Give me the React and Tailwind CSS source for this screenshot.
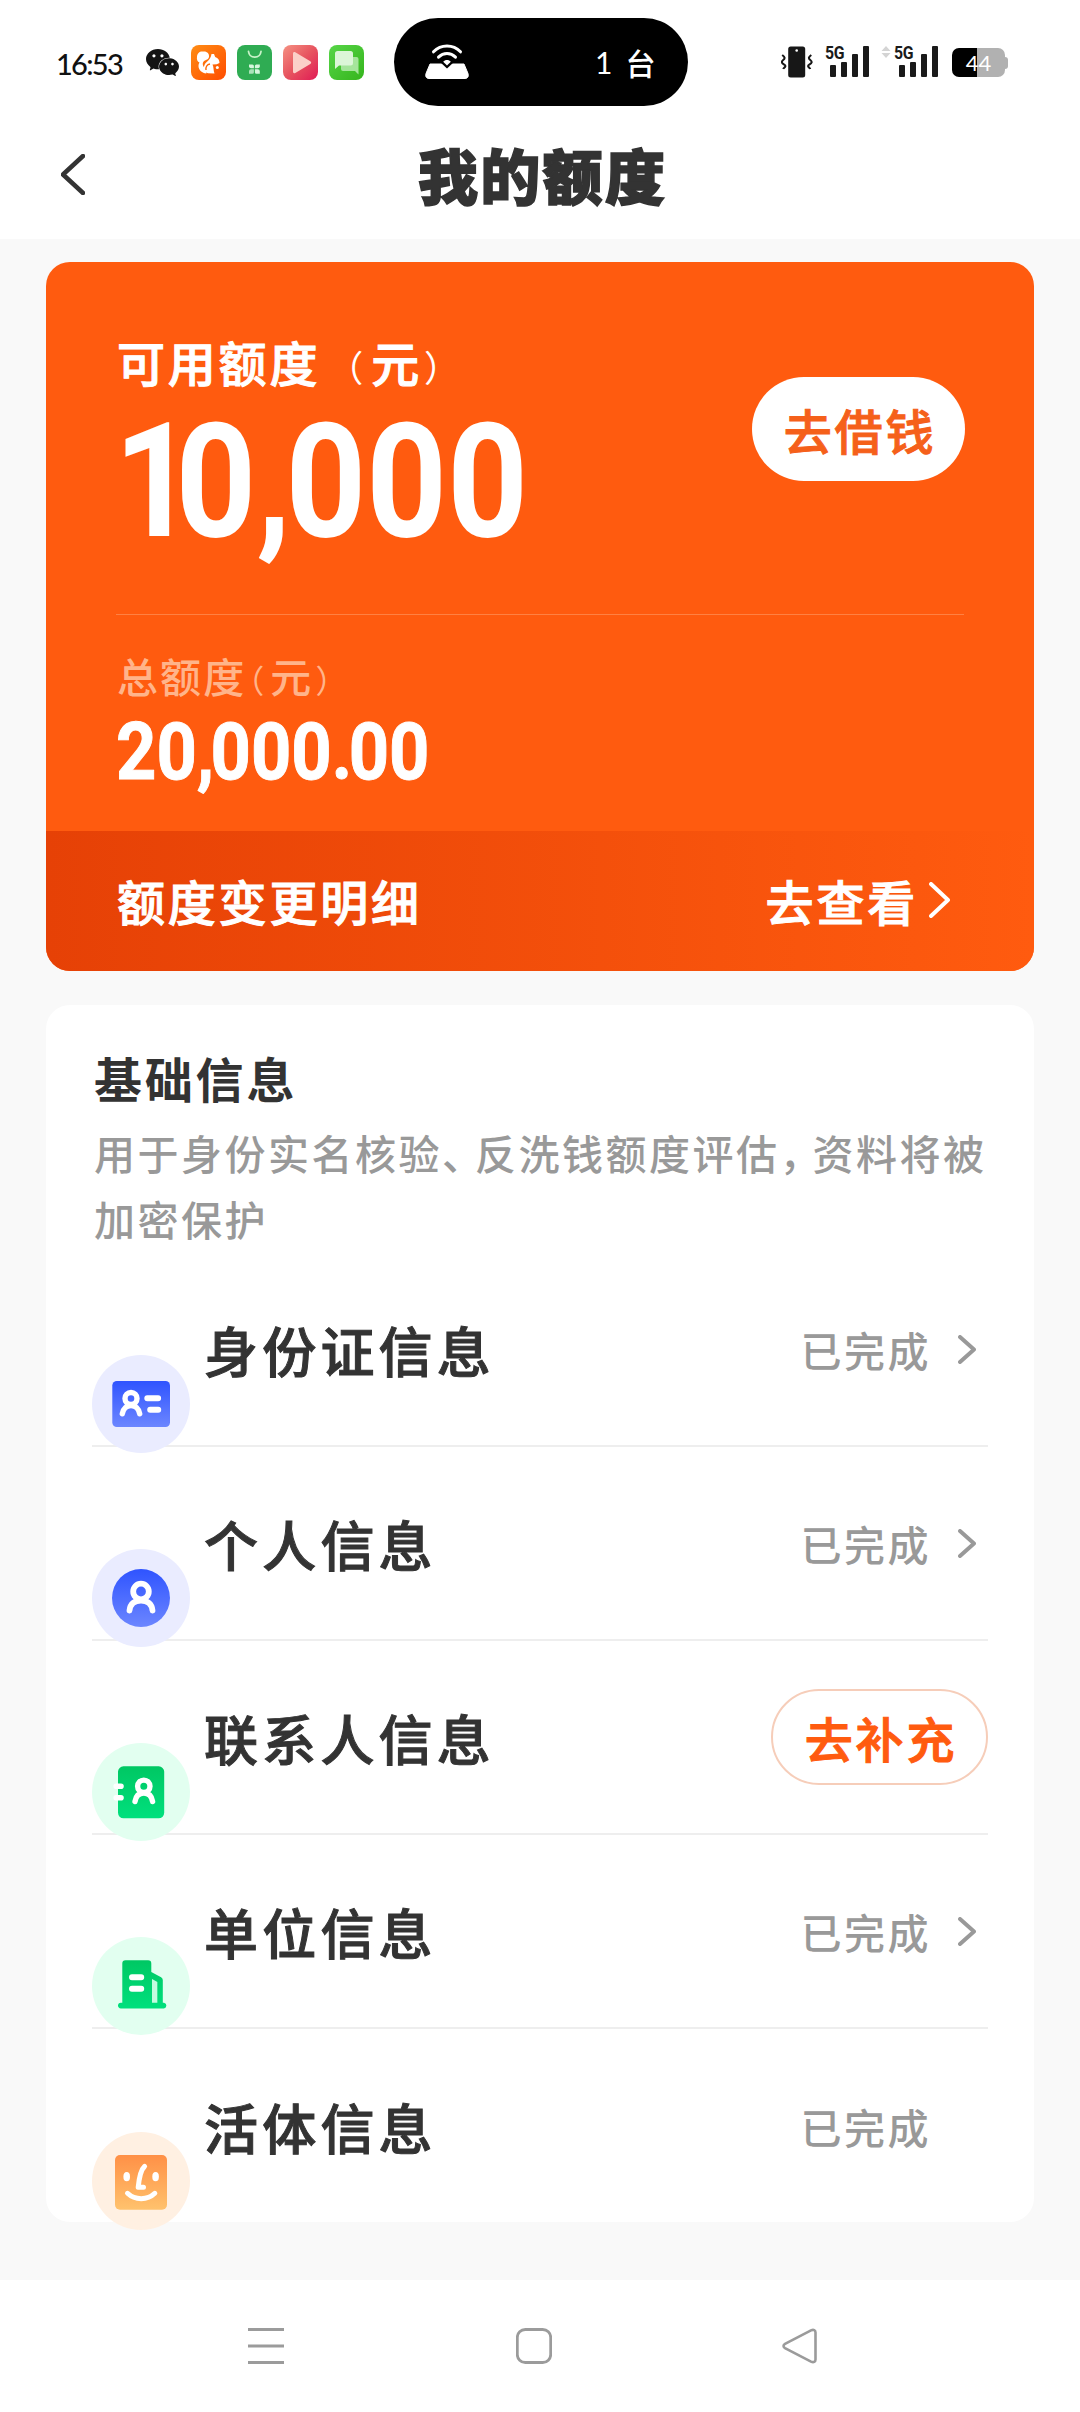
import React from "react";
import { SiWechat } from "react-icons/si";

function Person({ cx, cy, r, w, body }) {
  return (
    <g fill="none" stroke="#fff" strokeWidth={w} strokeLinecap="round">
      <circle cx={cx} cy={cy} r={r} />
      <path d={body} />
    </g>
  );
}

function IdCardIcon() {
  return (
    <svg viewBox="0 0 98 98" className="block size-[98px]">
      <defs>
        <linearGradient id="blue" x1="0" y1="0" x2="0" y2="1">
          <stop offset="0" stopColor="#2f54ff" />
          <stop offset="1" stopColor="#6c86ff" />
        </linearGradient>
      </defs>
      <circle cx="49" cy="49" r="49" fill="#eaecff" />
      <rect x="20.3" y="26" width="57.7" height="46" rx="4.5" fill="url(#blue)" />
      <Person cx="39" cy="43.5" r="6" w="5.4" body="M30.3 58.800C31.300 53 35 50.500 39 50.500S46.700 53 47.700 58.800" />
      <path d="M55.3 43.2h10.8M58.2 54.8h8" stroke="#fff" strokeWidth="6" strokeLinecap="round" />
    </svg>
  );
}

function PersonIcon() {
  return (
    <svg viewBox="0 0 98 98" className="block size-[98px]">
      <circle cx="49" cy="49" r="49" fill="#eaecff" />
      <circle cx="49" cy="49" r="29" fill="url(#blue)" />
      <Person cx="49" cy="42.5" r="7.8" w="5.8" body="M37.5 61.500C38.200 54.500 43 51.500 49 51.500S59.800 54.500 60.500 61.500" />
    </svg>
  );
}

function ContactsIcon() {
  return (
    <svg viewBox="0 0 98 98" className="block size-[98px]">
      <defs>
        <linearGradient id="green" x1="0" y1="0" x2="0" y2="1">
          <stop offset="0" stopColor="#00c763" />
          <stop offset="1" stopColor="#00e07d" />
        </linearGradient>
      </defs>
      <circle cx="49" cy="49" r="49" fill="#e2fff0" />
      <rect x="26" y="23.3" width="46.2" height="52" rx="5.5" fill="url(#green)" />
      <path d="M24.2 43.300h4.800M24.200 54.700h4.800" stroke="#fff" strokeWidth="5.6" strokeLinecap="round" />
      <Person cx="51.8" cy="43.3" r="6.2" w="5.4" body="M43 58.500C44 52.500 47.500 50 51.800 50S59.600 52.500 60.600 58.500" />
    </svg>
  );
}

function BuildingIcon() {
  return (
    <svg viewBox="0 0 98 98" className="block size-[98px]">
      <circle cx="49" cy="49" r="49" fill="#e2fff0" />
      <path d="M60 42L65.300 45V66H60z" fill="#c3fbdf" />
      <path
        d="M26 68.600a2.900 2.900 0 0 1 2.900-2.900h1.400V26.500a3.200 3.200 0 0 1 3.200-3.200h22.600a3.200 3.200 0 0 1 3.200 3.200v8.500l9.800 5.300a3.200 3.200 0 0 1 1.700 2.800v22.600h1.200a2.900 2.900 0 0 1 0 5.700H28.900a2.900 2.900 0 0 1-2.900-2.800zM60 42v23.700h5.300V45z"
        fill="url(#green)"
        fillRule="evenodd"
      />
      <path d="M40 40.300h9.200M40 51.700h9.200" stroke="#fff" strokeWidth="6" strokeLinecap="round" />
    </svg>
  );
}

function FaceIcon() {
  return (
    <svg viewBox="0 0 98 98" className="block size-[98px]">
      <defs>
        <linearGradient id="amber" x1="0" y1="0" x2="0" y2="1">
          <stop offset="0" stopColor="#ff9046" />
          <stop offset="1" stopColor="#ffc26d" />
        </linearGradient>
      </defs>
      <circle cx="49" cy="49" r="49" fill="#fff0e2" />
      <rect x="23" y="23" width="52" height="54.7" rx="5" fill="url(#amber)" />
      <ellipse cx="34.7" cy="44.7" rx="3.3" ry="4.6" fill="#fff" />
      <ellipse cx="63.6" cy="44.7" rx="3.3" ry="4.6" fill="#fff" />
      <g fill="none" stroke="#fff" strokeWidth="5" strokeLinecap="round" strokeLinejoin="round">
        <path d="M52.600 34.300C48.500 38 47 47 46.200 55.300H51.500" />
        <path d="M35.500 61.300C43 68.400 55.500 68.400 62.800 61.300" />
      </g>
    </svg>
  );
}

function Signal() {
  return (
    <div className="relative h-[31px] w-[44px]">
      <span className="absolute -top-[1px] left-0 origin-left scale-x-[0.88] font-['Roboto'] text-[18px] leading-[16px] font-bold tracking-[-0.5px] text-[#1a1a1a]">5G</span>
      <div className="flex h-full items-end justify-end gap-[5px]">
        <i className="h-[12px] w-[6px] rounded-[1px] bg-[#1a1a1a]" />
        <i className="h-[15px] w-[6px] rounded-[1px] bg-[#1a1a1a]" />
        <i className="h-[23px] w-[6px] rounded-[1px] bg-[#1a1a1a]" />
        <i className="h-[31px] w-[6px] rounded-[1px] bg-[#1a1a1a]" />
      </div>
    </div>
  );
}

function AppIcons() {
  return (
    <div className="flex gap-[11px]">
      <svg viewBox="0 0 35 35" className="size-[35px]">
        <defs>
          <linearGradient id="uc" x1="0" y1="0" x2="1" y2="1">
            <stop offset="0" stopColor="#ff8d14" />
            <stop offset="1" stopColor="#ff4c00" />
          </linearGradient>
        </defs>
        <rect width="35" height="35" rx="8" fill="url(#uc)" />
        <path
          d="M6 12c0-4 3-6 6-5.500 4-.5 6.500 2 6 5.500-.4 2-2 2.600-4 3.500-3 1.400-3 5 .2 8 1.200 1.200 2 3 1 5-4-.3-7.500-3.500-7.700-7-.1-2 .5-3.200 1-4C6.500 17 5.500 14.500 6 12z"
          fill="#fff"
        />
        <path d="M23 9l1.200 3c3 1 4.300 3.200 4.300 6l-2.700 1.200-4.300.3c1.300 2.500.8 6 2 9l-6.500-.2c-3.500-1.500-5-5-3.500-8.300 1.300-3.500 6-4.500 7-11z" fill="#fff" />
        <path d="M15 25c-.5-3 1-5.500 4-6" stroke="#ff6500" strokeWidth="1.4" fill="none" />
        <circle cx="26.3" cy="22.5" r="1.5" fill="#fff" />
      </svg>
      <svg viewBox="0 0 35 35" className="size-[35px]">
        <rect width="35" height="35" rx="8" fill="#2fac53" />
        <path d="M11.500 6.500c1 7.500 11.500 7.500 12.500 0" stroke="#c9f3c9" strokeWidth="1.8" fill="none" strokeLinecap="round" />
        <g fill="#d5f6dc">
          <path d="M12 19.500h3.400a1.500 1.500 0 0 1 1.500 1.500v2.300H14a2 2 0 0 1-2-2z" />
          <path d="M22.800 19.500h-3.400a1.500 1.500 0 0 0-1.500 1.500v2.300h2.900a2 2 0 0 0 2-2z" />
          <path d="M12 28.800h3.400a1.500 1.500 0 0 0 1.500-1.500v-3H14a2 2 0 0 0-2 2z" opacity=".75" />
          <path d="M22.800 28.800h-3.400a1.500 1.500 0 0 1-1.500-1.500v-3h2.900a2 2 0 0 1 2 2z" />
        </g>
      </svg>
      <svg viewBox="0 0 35 35" className="size-[35px]">
        <defs>
          <linearGradient id="vid" x1="0" y1="0" x2="1" y2="1">
            <stop offset="0" stopColor="#f59283" />
            <stop offset=".5" stopColor="#e7545f" />
            <stop offset="1" stopColor="#e01a55" />
          </linearGradient>
        </defs>
        <rect width="35" height="35" rx="8" fill="url(#vid)" />
        <path d="M10 8.500c0-1.500 1-2 2.300-1.300l15 9c1.200.8 1.200 2 0 2.700l-15 9C11 28.600 10 28 10 26.500z" fill="#fbd0c8" />
      </svg>
      <svg viewBox="0 0 35 35" className="size-[35px]">
        <defs>
          <linearGradient id="sms" x1="0" y1="0" x2="1" y2="1">
            <stop offset="0" stopColor="#57d548" />
            <stop offset="1" stopColor="#35b51c" />
          </linearGradient>
        </defs>
        <rect width="35" height="35" rx="8" fill="url(#sms)" />
        <path d="M12 12h15.500a2 2 0 0 1 2 2v15.500L26 26H14a2 2 0 0 1-2-2z" fill="#a5e59b" />
        <path d="M8.500 6h13a2.500 2.500 0 0 1 2.500 2.500v9.500a2.500 2.500 0 0 1-2.500 2.500H10L6 24V8.500A2.500 2.500 0 0 1 8.500 6z" fill="#dcf6d8" />
      </svg>
    </div>
  );
}

function StatusBar() {
  return (
    <div className="flex h-[121px] items-start">
      <span className="mt-[46px] ml-[56px] w-[90px] font-['Lato'] text-[29px] leading-[36px] font-medium tracking-[-1.7px] text-[#111]">16:53</span>
      <SiWechat className="mt-[46px] mr-[12px] size-[33px] text-[#141414]" />
      <div className="mt-[45px]">
        <AppIcons />
      </div>
      <div className="mt-[18px] ml-[30px] flex h-[88px] w-[294px] items-center rounded-full bg-black text-white">
        <svg viewBox="0 0 44 36" className="ml-[31px] h-[36px] w-[44px]">
          <path d="M5 20h34l4 9.500c1 3-.5 5-3 5H4c-2.500 0-4-2-3-5z" fill="#fff" stroke="#fff" strokeLinejoin="round" />
          <path d="M22 24.500l-8-7.500c4-4.500 12-4.500 16 0z" fill="#000" />
          <g stroke="#fff" fill="none" strokeWidth="3" strokeLinecap="round">
            <path d="M8.500 7.800C16 0 28 0 35.500 7.800" />
            <path d="M13.500 13.200c5-4.800 12-4.800 17 0" />
          </g>
          <path d="M22 21.500l-3.800-3.700c2-2.400 5.600-2.400 7.600 0z" fill="#fff" />
        </svg>
        <span className="ml-[126px] font-['Lato','Noto_Sans_CJK_SC',sans-serif] text-[30px] leading-[40px]">1</span>
        <span className="ml-[13px] font-['Noto_Sans_CJK_SC',sans-serif] text-[30px] leading-[40px] font-medium">台</span>
      </div>
      <svg viewBox="0 0 32 32" className="mt-[46px] ml-[93px] size-[32px]">
        <rect x="7.2" y="0.5" width="17" height="31" rx="2.5" fill="#171717" />
        <circle cx="15.7" cy="4.5" r="1.3" fill="#fff" />
        <path d="M1.200 9c3 2.300 3 3.300 1 5s-2 2.800 1 4.600-.5 3-1 4.400M30.300 9c-3 2.300-3 3.300-1 5s2 2.800-1 4.600.5 3 1 4.400" fill="none" stroke="#171717" strokeWidth="2" />
      </svg>
      <div className="mt-[46px] ml-[12px]">
        <Signal />
      </div>
      <svg viewBox="0 0 10 12" className="mt-[46px] ml-[12px] h-[12px] w-[10px]">
        <path d="M5 0l4.500 5h-9zM5 12L.5 7h9z" fill="#d4d4d4" />
      </svg>
      <div className="mt-[46px] ml-[3px]">
        <Signal />
      </div>
      <div className="mt-[48px] ml-[14px] flex items-center">
        <div className="flex h-[29px] w-[53px] items-center justify-center rounded-[7px] bg-[linear-gradient(90deg,#000_0_47%,#b1b1b1_47%)] font-['Lato'] text-[22px] leading-[29px] text-white">44</div>
        <i className="h-[12px] w-[3px] rounded-r-[3px] bg-[#b1b1b1]" />
      </div>
    </div>
  );
}

function Chevron({ className, width, height, stroke }) {
  return (
    <svg viewBox={`0 0 ${width} ${height}`} width={width} height={height} className={className}>
      <path
        d={`M2 2L${width - 2} ${height / 2}L2 ${height - 2}`}
        fill="none"
        stroke="currentColor"
        strokeWidth={stroke}
        strokeLinecap="round"
        strokeLinejoin="round"
      />
    </svg>
  );
}

function CreditCard() {
  return (
    <section className="mx-[46px] mt-[23px] h-[709px] overflow-hidden rounded-[24px] bg-[#ff5b0f] text-white">
      <div className="flex h-[569px] flex-col px-[70px]">
        <div className="flex h-[353px] items-start justify-between border-b border-[#ff8143]">
          <div className="pt-[75px]">
            <div className="h-[48px] pl-[1px] text-[48px] leading-[48px] font-medium tracking-[2.8px] [-webkit-text-stroke:1px_white]">
              可用额度
              <span className="ml-[7px] text-[36px] font-normal tracking-[8px] [-webkit-text-stroke:0px]">（</span>元
              <span className="ml-[2px] text-[36px] font-normal [-webkit-text-stroke:0px]">）</span>
            </div>
            <div className="mt-[33px] ml-[-2px] h-[128px] origin-left scale-x-[0.88] font-['Roboto'] text-[160px] leading-[128px] font-bold">
              <span className="tracking-[-22px]">1</span>0<span className="tracking-[-6px]">,</span>000
            </div>
          </div>
          <button className="mt-[115px] mr-[-1px] flex h-[104px] w-[213px] items-center justify-center rounded-full bg-white pl-[3px] text-[48px] leading-[48px] font-medium tracking-[2.8px] text-[#f5601a] [-webkit-text-stroke:1px_#f5601a]">
            去借钱
          </button>
        </div>
        <div className="mt-[40px] h-[40px] pl-[1px] text-[41px] leading-[40px] font-medium tracking-[2.1px] text-[#ffb48a]">
          总额度
          <span className="ml-[2px] text-[32px] font-normal tracking-[6px] [font-feature-settings:'halt']">（</span>元
          <span className="ml-[2px] text-[32px] font-normal">）</span>
        </div>
        <div className="mt-[25px] h-[64px] origin-left scale-x-[0.88] font-['Roboto'] text-[80px] leading-[64px] font-bold [-webkit-text-stroke:1px_white]">
          20<span className="tracking-[-4px]">,</span>000<span className="tracking-[-4px]">.</span>00
        </div>
      </div>
      <div className="flex h-[140px] items-center justify-between bg-linear-to-r from-[#e64106] to-[#ff5b0f] pr-[84px] pb-[2px] pl-[71px] text-[48px] leading-[48px] font-medium tracking-[2.8px] [-webkit-text-stroke:1px_white]">
        <span>额度变更明细</span>
        <span className="flex items-center">
          去查看
          <Chevron className="ml-[11px]" width={21} height={36} stroke={4} />
        </span>
      </div>
    </section>
  );
}

const ROWS = [
  { title: "身份证信息", Icon: IdCardIcon, arrow: true },
  { title: "个人信息", Icon: PersonIcon, arrow: true },
  { title: "联系人信息", Icon: ContactsIcon, action: "去补充" },
  { title: "单位信息", Icon: BuildingIcon, arrow: true },
  { title: "活体信息", Icon: FaceIcon, last: true },
];

function InfoRow({ title, Icon, arrow, action, last }) {
  return (
    <li className={`flex h-[194px] items-center ${last ? "" : "border-b-2 border-[#eeeeee]"}`}>
      <div className="mt-[109px]">
        <Icon />
      </div>
      <span className="mt-[2px] ml-[14px] flex-1 text-[54px] leading-[54px] font-medium tracking-[4.2px] text-[#333] [-webkit-text-stroke:1px_#333]">{title}</span>
      {action ? (
        <button className="flex h-[96px] w-[217px] items-center justify-center rounded-full border-2 border-[#f6cdb9] pl-[3px] text-[48px] leading-[48px] font-medium tracking-[2.8px] text-[#ff5b0f] [-webkit-text-stroke:1px_#ff5b0f]">
          {action}
        </button>
      ) : (
        <span className="flex items-center text-[41px] leading-[41px] font-medium tracking-[2.5px] text-[#999]">
          已完成
          <span className="mt-[1px] ml-[27px] w-[30px]">{arrow && <Chevron width={18} height={29} stroke={4} />}</span>
        </span>
      )}
    </li>
  );
}

export default function App() {
  return (
    <div className="flex h-[2412px] w-[1080px] flex-col bg-[#f9f9f9] font-['Noto_Sans_CJK_SC',sans-serif]">
      <header className="h-[239px] bg-white">
        <StatusBar />
        <div className="flex h-[106px] items-center">
          <Chevron className="ml-[61px] rotate-180 text-[#333]" width={24} height={41} stroke={4.5} />
          <h1 className="ml-[333px] text-[60px] leading-[60px] font-black tracking-[2.3px] text-[#333] [-webkit-text-stroke:1.5px_#333]">我的额度</h1>
        </div>
      </header>

      <CreditCard />

      <section className="mx-[46px] mt-[34px] h-[1217px] rounded-[24px] bg-white pr-[46px] pl-[46px]">
        <h2 className="pt-[48px] pl-[2px] text-[48px] leading-[48px] font-bold tracking-[2.8px] text-[#333]">基础信息</h2>
        <p className="mt-[18px] pl-[2px] text-[41px] leading-[66px] font-medium tracking-[2.5px] whitespace-nowrap text-[#999]">
          用于身份实名核验<span className="tracking-[-8px]">、</span>反洗钱额度评估<span className="tracking-[-8px]">，</span>资料将被
          <br />
          加密保护
        </p>
        <ul className="mt-[2px]">
          {ROWS.map((row) => (
            <InfoRow key={row.title} {...row} />
          ))}
        </ul>
      </section>

      <nav className="mt-auto flex h-[132px] items-center bg-white text-[#9b9b9b]">
        <svg viewBox="0 0 36 36" className="ml-[248px] size-[36px]">
          <path d="M0 1.500h36M0 18h36M0 34.500h36" stroke="currentColor" strokeWidth="3" />
        </svg>
        <svg viewBox="0 0 36 36" className="ml-[232px] size-[36px]">
          <rect x="1.3" y="1.5" width="33.4" height="33" rx="8" fill="none" stroke="currentColor" strokeWidth="2.8" />
        </svg>
        <svg viewBox="0 0 36 36" className="ml-[230px] size-[36px]">
          <path d="M3 15.800L29 2.400C31.500 1.200 33.500 2 33.500 4.500V31.500C33.500 34 31.500 34.800 29 33.600L3 20.200C1 19 1 17 3 15.800z" fill="none" stroke="currentColor" strokeWidth="2.6" />
        </svg>
      </nav>
    </div>
  );
}
